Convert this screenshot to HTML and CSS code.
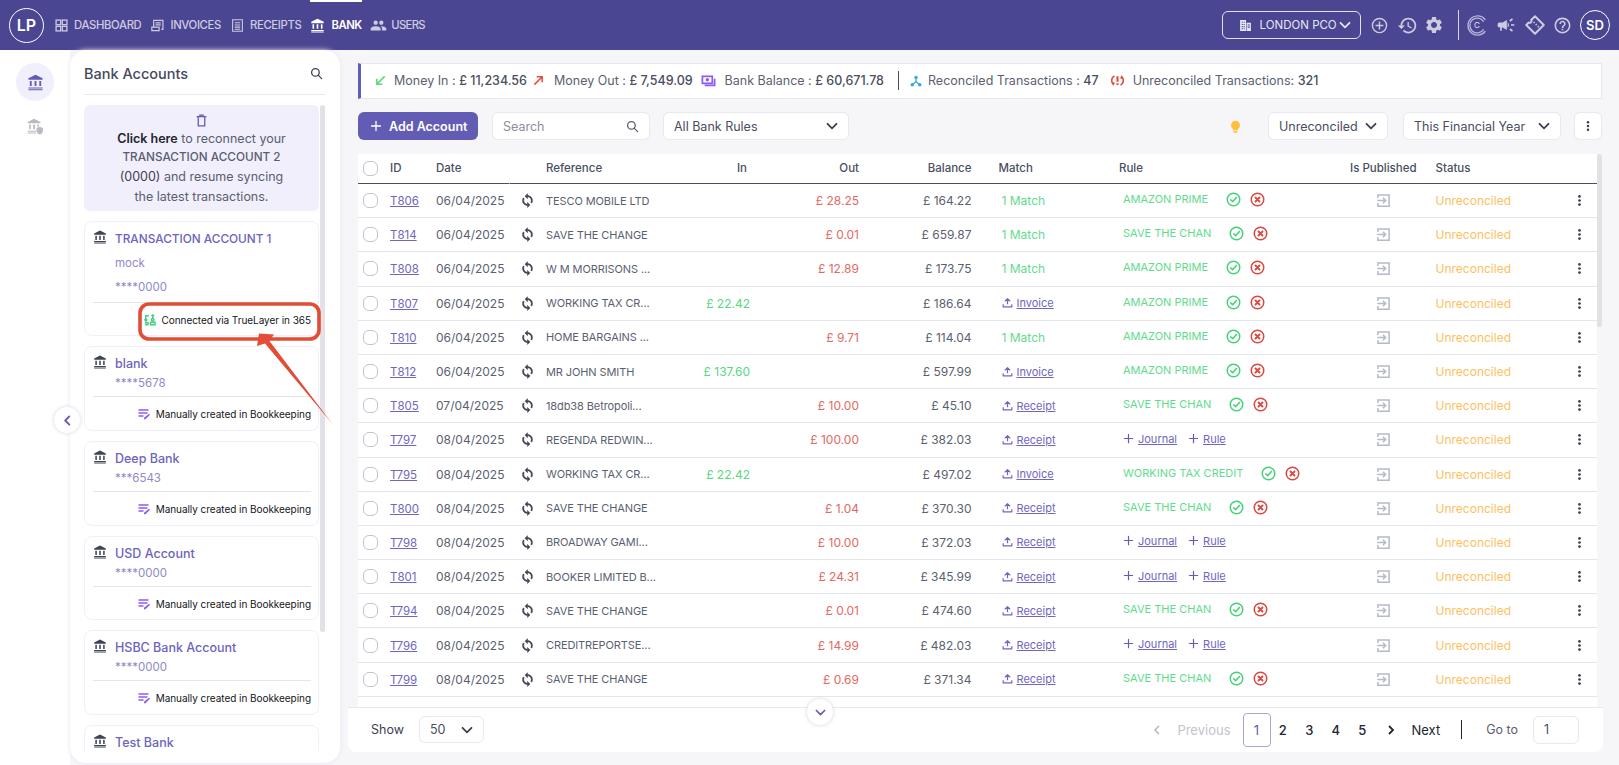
FILE: index.html
```html
<!DOCTYPE html>
<html lang="en">
<head>
<meta charset="utf-8">
<title>Bank</title>
<link rel="stylesheet" href="styles.css">
</head>
<body>
<svg class="sprite" xmlns="http://www.w3.org/2000/svg">
<symbol id="bank" viewBox="0 0 24 24"><path fill="currentColor" d="M12 1 2 6v2.2h20V6zM4 10v7h2.6v-7zm6.7 0v7h2.6v-7zm6.7 0v7H20v-7zM2 19v1.6h20V19zm0 2.4V23h20v-1.6z"/></symbol>
<symbol id="bankshield" viewBox="0 0 24 24"><path fill="currentColor" d="M10 1 1 5.5v2h18v-2zM3 9v7h2.4V9zm5.8 0v7h2.4V9zm5.8 0v3h2.4V9zM1 18v1.5h12V18zm0 2.6V22h12v-1.4z"/><path fill="currentColor" d="M18 12.5l-4.5 1.7v3.3c0 3 2 5 4.5 5.8 2.5-.8 4.5-2.8 4.5-5.8v-3.3z"/></symbol>
<symbol id="dash" viewBox="0 0 24 24"><g fill="none" stroke="currentColor" stroke-width="2.4"><rect x="2" y="2" width="8.5" height="8.5"/><rect x="13.5" y="2" width="8.5" height="8.5"/><rect x="2" y="13.5" width="8.5" height="8.5"/><rect x="13.5" y="13.5" width="8.5" height="8.5"/></g></symbol>
<symbol id="invoice" viewBox="0 0 24 24"><path fill="none" stroke="currentColor" stroke-width="2.2" d="M5 15V2.5h17V19h-3M1.500 15H15v6.500H1.500zM8.500 7H18M8.500 11H18"/></symbol>
<symbol id="receipt" viewBox="0 0 24 24"><path fill="none" stroke="currentColor" stroke-width="2" d="M3 1.500h18v21H3zM7 7h10M7 11h10M7 15h10M7 19h10"/></symbol>
<symbol id="users" viewBox="0 0 24 24"><path fill="currentColor" d="M16 11c1.660 0 2.990-1.340 2.990-3S17.660 5 16 5c-1.660 0-3 1.340-3 3s1.340 3 3 3zm-8 0c1.660 0 2.990-1.340 2.990-3S9.660 5 8 5C6.340 5 5 6.340 5 8s1.340 3 3 3zm0 2c-2.330 0-7 1.170-7 3.500V19h14v-2.500c0-2.330-4.670-3.500-7-3.500zm8 0c-.29 0-.62.02-.97.05 1.160.84 1.970 1.970 1.970 3.450V19h6v-2.500c0-2.330-4.670-3.500-7-3.500z"/></symbol>
<symbol id="building" viewBox="0 0 24 24"><path fill="currentColor" fill-rule="evenodd" d="M2 2h11v20H2zm12 5h8v15h-8zM5 5v2h2V5zm3.500 0v2h2V5zM5 9v2h2V9zm3.500 0v2h2V9zM5 13v2h2v-2zm3.500 0v2h2v-2zM5 17v2h2v-2zm3.500 0v2h2v-2zM16 10v2h4v-2zm0 4v2h4v-2z"/></symbol>
<symbol id="chev" viewBox="0 0 12 12"><path fill="none" stroke="currentColor" stroke-width="1.800" stroke-linecap="round" stroke-linejoin="round" d="M1.500 3.800 6 8.300l4.500-4.500"/></symbol>
<symbol id="plusc" viewBox="0 0 24 24"><g fill="none" stroke="currentColor" stroke-width="2"><circle cx="12" cy="12" r="10"/><path d="M12 6.500v11M6.500 12h11"/></g></symbol>
<symbol id="history" viewBox="0 0 24 24"><path fill="currentColor" d="M13 3c-4.970 0-9 4.030-9 9H1l3.890 3.890.07.14L9 12H6c0-3.870 3.130-7 7-7s7 3.130 7 7-3.130 7-7 7c-1.930 0-3.680-.79-4.940-2.060l-1.420 1.420C8.270 19.990 10.510 21 13 21c4.970 0 9-4.030 9-9s-4.030-9-9-9zm-1 5v5l4.280 2.540.72-1.210-3.500-2.080V8H12z"/></symbol>
<symbol id="gear" viewBox="0 0 24 24"><path fill="currentColor" d="M19.140 12.940c.04-.3.06-.61.06-.94 0-.32-.02-.64-.07-.94l2.030-1.580c.18-.14.23-.41.12-.61l-1.920-3.320c-.12-.22-.37-.29-.59-.22l-2.390.96c-.5-.38-1.030-.7-1.620-.94l-.36-2.540c-.04-.24-.24-.41-.48-.41h-3.840c-.24 0-.43.17-.47.41l-.36 2.540c-.59.24-1.130.57-1.620.94l-2.390-.96c-.22-.08-.47 0-.59.22L2.740 8.870c-.12.21-.08.47.12.61l2.030 1.580c-.05.3-.09.63-.09.94s.02.64.07.94l-2.030 1.580c-.18.14-.23.41-.12.61l1.920 3.320c.12.22.37.29.59.22l2.390-.96c.5.38 1.030.7 1.620.94l.36 2.540c.05.24.24.41.48.41h3.840c.24 0 .44-.17.47-.41l.36-2.540c.59-.24 1.130-.56 1.620-.94l2.390.96c.22.08.47 0 .59-.22l1.920-3.320c.12-.22.07-.47-.12-.61l-2.010-1.580zM12 15.600c-1.980 0-3.600-1.620-3.600-3.600s1.620-3.600 3.600-3.600 3.600 1.620 3.600 3.600-1.620 3.600-3.600 3.600z"/></symbol>
<symbol id="mega" viewBox="0 0 24 24"><path fill="currentColor" d="M18 11v2h4v-2h-4zm-2 6.610c.96.71 2.210 1.650 3.200 2.390.4-.53.8-1.070 1.200-1.600-.99-.74-2.240-1.680-3.200-2.400-.4.54-.8 1.080-1.200 1.610zM20.400 5.600c-.4-.53-.8-1.070-1.200-1.600-.99.74-2.240 1.680-3.200 2.400.4.53.8 1.070 1.200 1.600.96-.72 2.210-1.650 3.200-2.400zM4 9c-1.100 0-2 .9-2 2v2c0 1.100.9 2 2 2h1v4h2v-4h1l5 3V6L8 9H4zm11.500 3c0-1.330-.58-2.530-1.500-3.350v6.690c.92-.81 1.500-2.010 1.500-3.340z"/></symbol>
<symbol id="ticket" viewBox="0 0 24 24"><g fill="none" stroke="currentColor" stroke-width="2.400" stroke-linejoin="round"><path d="M12 1.500 22.500 12 12 22.500 1.500 12l3-3a2.200 2.200 0 0 0 3-3z"/><path d="M10.500 8.500l1 1M13 11l1 1M15.500 13.500l1 1"/></g></symbol>
<symbol id="help" viewBox="0 0 24 24"><path fill="currentColor" d="M11 18h2v-2h-2v2zm1-16C6.480 2 2 6.480 2 12s4.480 10 10 10 10-4.480 10-10S17.520 2 12 2zm0 18c-4.410 0-8-3.590-8-8s3.590-8 8-8 8 3.590 8 8-3.590 8-8 8zm0-14c-2.210 0-4 1.790-4 4h2c0-1.100.9-2 2-2s2 .9 2 2c0 2-3 1.750-3 5h2c0-2.250 3-2.500 3-5 0-2.210-1.790-4-4-4z"/></symbol>
<symbol id="search" viewBox="0 0 24 24"><g fill="none" stroke="currentColor" stroke-width="2.400" stroke-linecap="round"><circle cx="10" cy="10" r="7"/><path d="m15.500 15.500 6 6"/></g></symbol>
<symbol id="sync" viewBox="0 0 24 24"><path fill="currentColor" stroke="currentColor" stroke-width=".8" d="M12 4V1L8 5l4 4V6c3.310 0 6 2.690 6 6 0 1.010-.25 1.970-.7 2.800l1.460 1.460C19.540 15.030 20 13.570 20 12c0-4.420-3.580-8-8-8zm0 14c-3.310 0-6-2.690-6-6 0-1.010.25-1.970.7-2.800L5.240 7.740C4.460 8.970 4 10.430 4 12c0 4.420 3.580 8 8 8v3l4-4-4-4v3z"/></symbol>
<symbol id="pub" viewBox="0 0 24 24"><g fill="none" stroke="currentColor" stroke-width="2.400"><path d="M3 8V3h18v18H3v-5"/><path d="M2 12h13M11 7.500l4.500 4.500-4.500 4.500"/></g></symbol>
<symbol id="up" viewBox="0 0 24 24"><path fill="none" stroke="currentColor" stroke-width="2.600" stroke-linejoin="round" d="M12 16V4M6 9.500 12 3.500l6 6M2.500 16v5.500h19V16"/></symbol>
<symbol id="ok" viewBox="0 0 24 24"><g fill="none" stroke="currentColor" stroke-width="2.400" stroke-linecap="round" stroke-linejoin="round"><circle cx="12" cy="12" r="10"/><path d="m7.500 12.500 3.200 3.200 6-7"/></g></symbol>
<symbol id="no" viewBox="0 0 24 24"><g fill="none" stroke="currentColor" stroke-width="2.400" stroke-linecap="round"><circle cx="12" cy="12" r="10"/><path stroke-width="3" d="m8.800 8.800 6.400 6.400M15.200 8.800l-6.400 6.400"/></g></symbol>
<symbol id="kebab" viewBox="0 0 24 24"><g fill="currentColor"><circle cx="12" cy="4.500" r="2.500"/><circle cx="12" cy="12" r="2.500"/><circle cx="12" cy="19.500" r="2.500"/></g></symbol>
<symbol id="plus" viewBox="0 0 24 24"><path fill="none" stroke="currentColor" stroke-width="2.600" stroke-linecap="round" d="M12 3v18M3 12h18"/></symbol>
<symbol id="trash" viewBox="0 0 24 24"><path fill="none" stroke="currentColor" stroke-width="2.400" d="M3 5h18M9 5V2h6v3M6 5v17h12V5"/></symbol>
<symbol id="bulb" viewBox="0 0 24 24"><path fill="currentColor" d="M12 1.500a8.200 8.200 0 0 0-4.500 15V19h9v-2.500A8.200 8.200 0 0 0 12 1.500zM8.500 20.500h7V22a1.500 1.500 0 0 1-1.500 1.500h-4A1.500 1.500 0 0 1 8.500 22z"/></symbol>
<symbol id="arrin" viewBox="0 0 24 24"><path fill="none" stroke="currentColor" stroke-width="3.400" d="M21 3 5 19M4 8v12h12"/></symbol>
<symbol id="arrout" viewBox="0 0 24 24"><path fill="none" stroke="currentColor" stroke-width="3.400" d="M3 21 19 5M8 4h12v12"/></symbol>
<symbol id="cash" viewBox="0 0 24 24"><g fill="none" stroke="currentColor" stroke-width="3"><rect x="1.500" y="4" width="17" height="12"/><path d="M22.500 8v11.500H5.500"/></g><circle cx="10" cy="10" r="3" fill="currentColor"/></symbol>
<symbol id="nodes" viewBox="0 0 24 24"><g fill="currentColor"><circle cx="12" cy="5" r="3.500"/><circle cx="4.500" cy="19.500" r="3.500"/><circle cx="19.500" cy="19.500" r="3.500"/></g><path fill="none" stroke="currentColor" stroke-width="2.600" d="M12 5v8L4.500 19.500M12 13l7.500 6.500"/></symbol>
<symbol id="unrec" viewBox="0 0 24 24"><g fill="none" stroke="currentColor"><path stroke-width="3" d="M6.500 3.500C2.500 6 .5 9.500 1.500 14c.5 2 1.500 3.500 3 4.500"/><path stroke-width="3" d="M17.500 20.500c4-2.500 6-6 5-10.500-.5-2-1.500-3.500-3-4.500"/><path stroke-width="4" d="M12 4v10.500M12 17v3.500"/></g><path fill="currentColor" d="m1 14.500 6.500 1.500L4 22zM23 9.500 16.500 8 20 2z"/></symbol>
<symbol id="link365" viewBox="0 0 24 24"><g fill="none" stroke="currentColor" stroke-width="3"><path d="M10 3.500H3.500V14M1 10.500l2.500 4 3-4"/><circle cx="6" cy="19.500" r="2.500"/><circle cx="17.500" cy="11.500" r="2.500"/><path d="M13 21.500h9v-5h-9z"/><path d="M17.500 8V2M15 4.500l2.500-2.500 2.500 2.500"/></g></symbol>
<symbol id="manual" viewBox="0 0 24 24"><path fill="none" stroke="currentColor" stroke-width="2.600" d="M1 4h20M1 10h18M1 16h10"/><path fill="currentColor" d="M22 11.500 24 13.500 15 22.500h-3v-2.800z"/></symbol>
</svg>

<div class="app">
  <header class="topbar">
    <div class="brand">LP</div>
    <nav class="nav">
      <a class="nav-item"><svg class="nav-ic"><use href="#dash"/></svg>DASHBOARD</a>
      <a class="nav-item"><svg class="nav-ic"><use href="#invoice"/></svg>INVOICES</a>
      <a class="nav-item"><svg class="nav-ic"><use href="#receipt"/></svg>RECEIPTS</a>
      <a class="nav-item active"><svg class="nav-ic wide"><use href="#bank"/></svg>BANK</a>
      <a class="nav-item users"><svg class="nav-ic wider"><use href="#users"/></svg>USERS</a>
    </nav>
    <div class="top-right">
      <button class="company"><svg class="co-ic"><use href="#building"/></svg><span class="co-name">LONDON PCO</span><svg class="co-chev"><use href="#chev"/></svg></button>
      <svg class="tool t-plus"><use href="#plusc"/></svg>
      <svg class="tool t-hist"><use href="#history"/></svg>
      <svg class="tool t-gear"><use href="#gear"/></svg>
      <span class="top-div"></span>
      <span class="clogo"><svg viewBox="0 0 24 24"><g fill="none" stroke="currentColor"><path stroke-width="1.500" d="M21 5.500A11 11 0 1 0 21 18.500"/><path stroke-width="1.500" d="M19 7.500A8.500 8.500 0 1 0 19 16.500"/></g></svg><span class="clogo-c">C</span></span>
      <svg class="tool t-mega"><use href="#mega"/></svg>
      <svg class="tool t-tick"><use href="#ticket"/></svg>
      <svg class="tool t-help"><use href="#help"/></svg>
      <div class="avatar">SD</div>
    </div>
  </header>

  <div class="body-row">
    <aside class="rail">
      <div class="rail-on"><svg class="rail-ic"><use href="#bank"/></svg></div>
      <svg class="rail-ic2"><use href="#bankshield"/></svg>
    </aside>

    <section class="panel">
      <div class="panel-head"><h2 class="panel-title">Bank Accounts</h2><svg class="panel-search"><use href="#search"/></svg></div>
      <div class="panel-scroll">
        <div class="accounts">
          <div class="notice">
            <svg class="notice-ic"><use href="#trash"/></svg>
            <p class="nline"><b>Click here</b> to reconnect your</p>
            <p class="nline caps">TRANSACTION ACCOUNT 2</p>
            <p class="nline"><span class="dk">(0000)</span> and resume syncing</p>
            <p class="nline">the latest transactions.</p>
          </div>
          <article class="card card-first">
            <div class="card-top"><svg class="card-ic"><use href="#bank"/></svg><div class="card-info"><div class="card-name caps-name">TRANSACTION ACCOUNT 1</div><div class="card-sub">mock</div><div class="card-no">****0000</div></div></div>
            <div class="card-foot"><svg class="foot-ic green"><use href="#link365"/></svg>Connected via TrueLayer in 365</div>
          </article>
          <article class="card">
            <div class="card-top"><svg class="card-ic"><use href="#bank"/></svg><div class="card-info"><div class="card-name">blank</div><div class="card-no">****5678</div></div></div>
            <div class="card-foot"><svg class="foot-ic"><use href="#manual"/></svg>Manually created in Bookkeeping</div>
          </article>
          <article class="card">
            <div class="card-top"><svg class="card-ic"><use href="#bank"/></svg><div class="card-info"><div class="card-name">Deep Bank</div><div class="card-no">***6543</div></div></div>
            <div class="card-foot"><svg class="foot-ic"><use href="#manual"/></svg>Manually created in Bookkeeping</div>
          </article>
          <article class="card">
            <div class="card-top"><svg class="card-ic"><use href="#bank"/></svg><div class="card-info"><div class="card-name">USD Account</div><div class="card-no">****0000</div></div></div>
            <div class="card-foot"><svg class="foot-ic"><use href="#manual"/></svg>Manually created in Bookkeeping</div>
          </article>
          <article class="card">
            <div class="card-top"><svg class="card-ic"><use href="#bank"/></svg><div class="card-info"><div class="card-name">HSBC Bank Account</div><div class="card-no">****0000</div></div></div>
            <div class="card-foot"><svg class="foot-ic"><use href="#manual"/></svg>Manually created in Bookkeeping</div>
          </article>
          <article class="card">
            <div class="card-top"><svg class="card-ic"><use href="#bank"/></svg><div class="card-info"><div class="card-name">Test Bank</div></div></div>
          </article>
        </div>
        <div class="side-track"><div class="side-thumb"></div></div>
      </div>
      <button class="collapse"><svg class="collapse-ic" viewBox="0 0 12 12"><path fill="none" stroke="currentColor" stroke-width="2" stroke-linecap="round" stroke-linejoin="round" d="M8 1.500 3.500 6 8 10.500"/></svg></button>
    </section>

    <main class="main">
      <div class="summary">
        <svg class="s-ic c-in"><use href="#arrin"/></svg><span class="s-txt first">Money In : <em>£ 11,234.56</em></span>
        <svg class="s-ic c-out"><use href="#arrout"/></svg><span class="s-txt">Money Out : <em>£ 7,549.09</em></span>
        <svg class="s-ic c-cash"><use href="#cash"/></svg><span class="s-txt">Bank Balance : <em>£ 60,671.78</em></span>
        <span class="s-div"></span>
        <svg class="s-ic c-blue"><use href="#nodes"/></svg><span class="s-txt">Reconciled Transactions : <em>47</em></span>
        <svg class="s-ic c-red"><use href="#unrec"/></svg><span class="s-txt">Unreconciled Transactions: <em>321</em></span>
      </div>

      <div class="toolbar">
        <button class="btn-add"><svg class="btn-plus"><use href="#plus"/></svg>Add Account</button>
        <div class="field f-search"><span class="ph">Search</span><svg class="f-ic"><use href="#search"/></svg></div>
        <div class="field f-rules"><span>All Bank Rules</span><svg class="f-chev"><use href="#chev"/></svg></div>
        <div class="spacer"></div>
        <svg class="bulb"><use href="#bulb"/></svg>
        <div class="field f-state"><span>Unreconciled</span><svg class="f-chev"><use href="#chev"/></svg></div>
        <div class="field f-year"><span>This Financial Year</span><svg class="f-chev"><use href="#chev"/></svg></div>
        <div class="field f-more"><svg class="k-ic"><use href="#kebab"/></svg></div>
      </div>

      <div class="table-row">
        <div class="table-wrap">
          <table class="tx">
            <colgroup><col class="w1"><col class="w2"><col class="w3"><col class="w4"><col class="w5"><col class="w6"><col class="w7"><col class="w8"><col class="w9"><col class="w10"><col class="w11"><col class="w12"><col class="w13"></colgroup>
            <thead><tr><th><span class="cb"></span></th><th>ID</th><th class="th-date">Date</th><th></th><th>Reference</th><th class="r th-in">In</th><th class="r">Out</th><th class="r">Balance</th><th class="th-match">Match</th><th>Rule</th><th>Is Published</th><th>Status</th><th></th></tr></thead>
            <tbody>
<tr><td><span class="cb"></span></td><td><a class="tid">T806</a></td><td>06/04/2025</td><td class="sy"><svg><use href="#sync"/></svg></td><td class="ref">TESCO MOBILE LTD</td><td></td><td class="out">£ 28.25</td><td class="bal">£ 164.22</td><td class="match">1 Match</td><td class="rule"><span class="rule-n">AMAZON PRIME</span><svg class="yes"><use href="#ok"/></svg><svg class="nope"><use href="#no"/></svg></td><td class="pb"><svg><use href="#pub"/></svg></td><td class="st">Unreconciled</td><td class="ke"><svg><use href="#kebab"/></svg></td></tr>
<tr><td><span class="cb"></span></td><td><a class="tid">T814</a></td><td>06/04/2025</td><td class="sy"><svg><use href="#sync"/></svg></td><td class="ref">SAVE THE CHANGE</td><td></td><td class="out">£ 0.01</td><td class="bal">£ 659.87</td><td class="match">1 Match</td><td class="rule"><span class="rule-n">SAVE THE CHAN</span><svg class="yes"><use href="#ok"/></svg><svg class="nope"><use href="#no"/></svg></td><td class="pb"><svg><use href="#pub"/></svg></td><td class="st">Unreconciled</td><td class="ke"><svg><use href="#kebab"/></svg></td></tr>
<tr><td><span class="cb"></span></td><td><a class="tid">T808</a></td><td>06/04/2025</td><td class="sy"><svg><use href="#sync"/></svg></td><td class="ref">W M MORRISONS ...</td><td></td><td class="out">£ 12.89</td><td class="bal">£ 173.75</td><td class="match">1 Match</td><td class="rule"><span class="rule-n">AMAZON PRIME</span><svg class="yes"><use href="#ok"/></svg><svg class="nope"><use href="#no"/></svg></td><td class="pb"><svg><use href="#pub"/></svg></td><td class="st">Unreconciled</td><td class="ke"><svg><use href="#kebab"/></svg></td></tr>
<tr><td><span class="cb"></span></td><td><a class="tid">T807</a></td><td>06/04/2025</td><td class="sy"><svg><use href="#sync"/></svg></td><td class="ref">WORKING TAX CR...</td><td class="in">£ 22.42</td><td></td><td class="bal">£ 186.64</td><td class="match-l"><svg><use href="#up"/></svg><a>Invoice</a></td><td class="rule"><span class="rule-n">AMAZON PRIME</span><svg class="yes"><use href="#ok"/></svg><svg class="nope"><use href="#no"/></svg></td><td class="pb"><svg><use href="#pub"/></svg></td><td class="st">Unreconciled</td><td class="ke"><svg><use href="#kebab"/></svg></td></tr>
<tr><td><span class="cb"></span></td><td><a class="tid">T810</a></td><td>06/04/2025</td><td class="sy"><svg><use href="#sync"/></svg></td><td class="ref">HOME BARGAINS ...</td><td></td><td class="out">£ 9.71</td><td class="bal">£ 114.04</td><td class="match">1 Match</td><td class="rule"><span class="rule-n">AMAZON PRIME</span><svg class="yes"><use href="#ok"/></svg><svg class="nope"><use href="#no"/></svg></td><td class="pb"><svg><use href="#pub"/></svg></td><td class="st">Unreconciled</td><td class="ke"><svg><use href="#kebab"/></svg></td></tr>
<tr><td><span class="cb"></span></td><td><a class="tid">T812</a></td><td>06/04/2025</td><td class="sy"><svg><use href="#sync"/></svg></td><td class="ref">MR JOHN SMITH</td><td class="in">£ 137.60</td><td></td><td class="bal">£ 597.99</td><td class="match-l"><svg><use href="#up"/></svg><a>Invoice</a></td><td class="rule"><span class="rule-n">AMAZON PRIME</span><svg class="yes"><use href="#ok"/></svg><svg class="nope"><use href="#no"/></svg></td><td class="pb"><svg><use href="#pub"/></svg></td><td class="st">Unreconciled</td><td class="ke"><svg><use href="#kebab"/></svg></td></tr>
<tr><td><span class="cb"></span></td><td><a class="tid">T805</a></td><td>07/04/2025</td><td class="sy"><svg><use href="#sync"/></svg></td><td class="ref">18db38 Betropoli...</td><td></td><td class="out">£ 10.00</td><td class="bal">£ 45.10</td><td class="match-l"><svg><use href="#up"/></svg><a>Receipt</a></td><td class="rule"><span class="rule-n">SAVE THE CHAN</span><svg class="yes"><use href="#ok"/></svg><svg class="nope"><use href="#no"/></svg></td><td class="pb"><svg><use href="#pub"/></svg></td><td class="st">Unreconciled</td><td class="ke"><svg><use href="#kebab"/></svg></td></tr>
<tr><td><span class="cb"></span></td><td><a class="tid">T797</a></td><td>08/04/2025</td><td class="sy"><svg><use href="#sync"/></svg></td><td class="ref">REGENDA REDWIN...</td><td></td><td class="out">£ 100.00</td><td class="bal">£ 382.03</td><td class="match-l"><svg><use href="#up"/></svg><a>Receipt</a></td><td class="rule"><svg class="add"><use href="#plus"/></svg><a class="add-l">Journal</a><svg class="add a2"><use href="#plus"/></svg><a class="add-l">Rule</a></td><td class="pb"><svg><use href="#pub"/></svg></td><td class="st">Unreconciled</td><td class="ke"><svg><use href="#kebab"/></svg></td></tr>
<tr><td><span class="cb"></span></td><td><a class="tid">T795</a></td><td>08/04/2025</td><td class="sy"><svg><use href="#sync"/></svg></td><td class="ref">WORKING TAX CR...</td><td class="in">£ 22.42</td><td></td><td class="bal">£ 497.02</td><td class="match-l"><svg><use href="#up"/></svg><a>Invoice</a></td><td class="rule"><span class="rule-n">WORKING TAX CREDIT</span><svg class="yes"><use href="#ok"/></svg><svg class="nope"><use href="#no"/></svg></td><td class="pb"><svg><use href="#pub"/></svg></td><td class="st">Unreconciled</td><td class="ke"><svg><use href="#kebab"/></svg></td></tr>
<tr><td><span class="cb"></span></td><td><a class="tid">T800</a></td><td>08/04/2025</td><td class="sy"><svg><use href="#sync"/></svg></td><td class="ref">SAVE THE CHANGE</td><td></td><td class="out">£ 1.04</td><td class="bal">£ 370.30</td><td class="match-l"><svg><use href="#up"/></svg><a>Receipt</a></td><td class="rule"><span class="rule-n">SAVE THE CHAN</span><svg class="yes"><use href="#ok"/></svg><svg class="nope"><use href="#no"/></svg></td><td class="pb"><svg><use href="#pub"/></svg></td><td class="st">Unreconciled</td><td class="ke"><svg><use href="#kebab"/></svg></td></tr>
<tr><td><span class="cb"></span></td><td><a class="tid">T798</a></td><td>08/04/2025</td><td class="sy"><svg><use href="#sync"/></svg></td><td class="ref">BROADWAY GAMI...</td><td></td><td class="out">£ 10.00</td><td class="bal">£ 372.03</td><td class="match-l"><svg><use href="#up"/></svg><a>Receipt</a></td><td class="rule"><svg class="add"><use href="#plus"/></svg><a class="add-l">Journal</a><svg class="add a2"><use href="#plus"/></svg><a class="add-l">Rule</a></td><td class="pb"><svg><use href="#pub"/></svg></td><td class="st">Unreconciled</td><td class="ke"><svg><use href="#kebab"/></svg></td></tr>
<tr><td><span class="cb"></span></td><td><a class="tid">T801</a></td><td>08/04/2025</td><td class="sy"><svg><use href="#sync"/></svg></td><td class="ref">BOOKER LIMITED B...</td><td></td><td class="out">£ 24.31</td><td class="bal">£ 345.99</td><td class="match-l"><svg><use href="#up"/></svg><a>Receipt</a></td><td class="rule"><svg class="add"><use href="#plus"/></svg><a class="add-l">Journal</a><svg class="add a2"><use href="#plus"/></svg><a class="add-l">Rule</a></td><td class="pb"><svg><use href="#pub"/></svg></td><td class="st">Unreconciled</td><td class="ke"><svg><use href="#kebab"/></svg></td></tr>
<tr><td><span class="cb"></span></td><td><a class="tid">T794</a></td><td>08/04/2025</td><td class="sy"><svg><use href="#sync"/></svg></td><td class="ref">SAVE THE CHANGE</td><td></td><td class="out">£ 0.01</td><td class="bal">£ 474.60</td><td class="match-l"><svg><use href="#up"/></svg><a>Receipt</a></td><td class="rule"><span class="rule-n">SAVE THE CHAN</span><svg class="yes"><use href="#ok"/></svg><svg class="nope"><use href="#no"/></svg></td><td class="pb"><svg><use href="#pub"/></svg></td><td class="st">Unreconciled</td><td class="ke"><svg><use href="#kebab"/></svg></td></tr>
<tr><td><span class="cb"></span></td><td><a class="tid">T796</a></td><td>08/04/2025</td><td class="sy"><svg><use href="#sync"/></svg></td><td class="ref">CREDITREPORTSE...</td><td></td><td class="out">£ 14.99</td><td class="bal">£ 482.03</td><td class="match-l"><svg><use href="#up"/></svg><a>Receipt</a></td><td class="rule"><svg class="add"><use href="#plus"/></svg><a class="add-l">Journal</a><svg class="add a2"><use href="#plus"/></svg><a class="add-l">Rule</a></td><td class="pb"><svg><use href="#pub"/></svg></td><td class="st">Unreconciled</td><td class="ke"><svg><use href="#kebab"/></svg></td></tr>
<tr><td><span class="cb"></span></td><td><a class="tid">T799</a></td><td>08/04/2025</td><td class="sy"><svg><use href="#sync"/></svg></td><td class="ref">SAVE THE CHANGE</td><td></td><td class="out">£ 0.69</td><td class="bal">£ 371.34</td><td class="match-l"><svg><use href="#up"/></svg><a>Receipt</a></td><td class="rule"><span class="rule-n">SAVE THE CHAN</span><svg class="yes"><use href="#ok"/></svg><svg class="nope"><use href="#no"/></svg></td><td class="pb"><svg><use href="#pub"/></svg></td><td class="st">Unreconciled</td><td class="ke"><svg><use href="#kebab"/></svg></td></tr>
            </tbody>
          </table>
        </div>
        <div class="tbl-track"><div class="tbl-thumb"></div></div>
      </div>

      <footer class="pager">
        <span class="show">Show</span>
        <div class="field f-show"><span>50</span><svg class="f-chev"><use href="#chev"/></svg></div>
        <button class="more"><svg class="more-ic"><use href="#chev"/></svg></button>
        <div class="spacer"></div>
        <svg class="pg-arrow dim" viewBox="0 0 12 12"><path fill="none" stroke="currentColor" stroke-width="1.600" d="M8 2 4 6l4 4"/></svg>
        <span class="pg-prev">Previous</span>
        <span class="pg-cur">1</span>
        <span class="pg-n">2</span><span class="pg-n">3</span><span class="pg-n">4</span><span class="pg-n">5</span>
        <svg class="pg-arrow next" viewBox="0 0 12 12"><path fill="none" stroke="currentColor" stroke-width="1.800" d="m4 2 4 4-4 4"/></svg>
        <span class="pg-next">Next</span>
        <span class="pg-div"></span>
        <span class="goto">Go to</span>
        <div class="field f-goto"><span>1</span></div>
      </footer>
    </main>
  </div>

  <svg class="annot" viewBox="0 0 1619 765">
    <rect x="140" y="304" width="179" height="35" rx="9" fill="none" stroke="#e24d38" stroke-width="3.600"/>
    <path fill="#e24d38" d="M259 333.500 274 334.500 269.500 341 332.500 424 265 343.500 257 346z"/>
  </svg>
</div>
</body>
</html>
```

FILE: styles.css
```css
* { box-sizing: border-box; }
html, body { margin: 0; height: 100%; }
body { font-family: Inter, "Open Sans", sans-serif; color: #4a4e60; background: #f6f6f8; overflow: hidden; }
button { font-family: inherit; padding: 0; border: 0; background: none; }
h2, p { margin: 0; }
.sprite { display: none; }

.app { width: 1619px; height: 765px; display: flex; flex-direction: column; position: relative; overflow: hidden; }

/* top bar */
.topbar { height: 50px; flex: none; background: #4b4691; display: flex; align-items: center; padding-left: 9px; color: #cdcbe2; }
.brand { width: 35px; height: 35px; border: 1px solid #fff; border-radius: 50%; display: flex; align-items: center; justify-content: center; color: #fff; font-size: 16px; font-weight: 600; flex: none; }
.nav { display: flex; margin-left: 11px; height: 50px; gap: 10px; }
.nav-item { position: relative; display: flex; align-items: center; gap: 6px; font-size: 11.3px; font-weight: 500; letter-spacing: -.35px; color: #cdcbe2; white-space: nowrap; }
.nav-ic { width: 13px; height: 13px; flex: none; }
.nav-ic.wide { width: 15px; height: 15px; }
.nav-ic.wider { width: 17px; height: 17px; }
.nav-item.active { color: #fff; font-weight: 600; letter-spacing: -.45px; margin-left: -1px; margin-right: -1.5px; }
.nav-item.active::before { content: ""; position: absolute; left: 0; right: 0; top: 0; height: 2px; background: #fff; }
.nav-item.users { letter-spacing: -.7px; gap: 4px; }
.top-right { margin-left: auto; display: flex; align-items: center; padding-right: 9px; }
.company { width: 139px; height: 28px; border: 1px solid #e3e2f0; border-radius: 6px; color: #e6e5f2; display: flex; align-items: center; padding-left: 16px; }
.co-ic { width: 13px; height: 13px; flex: none; }
.co-name { font-size: 11.5px; margin-left: 8px; white-space: nowrap; }
.co-chev { width: 12px; height: 12px; margin-left: 2px; flex: none; }
.tool { flex: none; color: #cdcbe2; }
.t-plus { width: 17px; height: 17px; margin-left: 10px; }
.t-hist { width: 21px; height: 21px; margin-left: 9px; }
.t-gear { width: 20px; height: 20px; margin-left: 6.5px; }
.top-div { width: 1px; height: 30px; background: #d9d8ea; margin: 0 7.5px 0 14px; flex: none; }
.clogo { position: relative; width: 21px; height: 21px; color: #b9b6d8; flex: none; display: block; }
.clogo svg { width: 21px; height: 21px; display: block; }
.clogo-c { position: absolute; inset: 0; display: flex; align-items: center; justify-content: center; font-size: 8px; color: #e6e5f2; }
.t-mega { width: 20px; height: 20px; margin-left: 8.5px; }
.t-tick { width: 20px; height: 20px; margin-left: 8.5px; }
.t-help { width: 19px; height: 19px; margin-left: 8px; }
.avatar { width: 30px; height: 30px; border: 1px solid #fff; border-radius: 50%; color: #fff; display: flex; align-items: center; justify-content: center; font-size: 13px; font-weight: 600; margin-left: 8.5px; flex: none; }

.body-row { flex: 1; min-height: 0; display: flex; }

/* rail */
.rail { width: 70px; flex: none; background: #fff; display: flex; flex-direction: column; align-items: center; padding: 13px 0 0; }
.rail-on { width: 38px; height: 38px; border-radius: 50%; background: #f0effb; display: flex; align-items: center; justify-content: center; color: #625cb5; }
.rail-ic { width: 17px; height: 17px; }
.rail-ic2 { width: 17px; height: 17px; margin-top: 17px; color: #b9bbc2; }

/* account panel */
.panel { width: 270px; flex: none; height: 713px; background: #fff; border-radius: 16px; box-shadow: 0 0 5px #e6e6f6; padding: 0 15px 12px 14px; display: flex; flex-direction: column; position: relative; }
.panel-head { height: 45px; flex: none; border-bottom: 1px solid #e9e9f1; display: flex; align-items: center; justify-content: space-between; padding: 2px 2px 0 0; }
.panel-title { font-size: 14.5px; font-weight: 500; color: #454a5d; }
.panel-search { width: 13px; height: 13px; color: #3c4050; }
.panel-scroll { flex: 1; min-height: 0; display: flex; margin-top: 10px; overflow: hidden; }
.accounts { width: 235px; flex: none; display: flex; flex-direction: column; gap: 10px; overflow: hidden; }
.side-track { width: 5px; margin-left: 1px; flex: none; }
.side-thumb { height: 527px; background: #e1e1e6; border-radius: 3px; }
.notice { flex: none; height: 106px; background: #f0effb; border-radius: 6px; padding: 8px 10px 0; text-align: center; font-size: 12.5px; color: #5a5e70; }
.nline { line-height: 19.2px; white-space: nowrap; }
.nline.caps { font-size: 11.75px; font-weight: 500; }
.dk { color: #3c4050; }
.notice-ic { width: 13px; height: 15px; display: block; margin: 0 auto 1px; color: #625cb5; }
.notice b { color: #22252f; font-weight: 600; }
.card { flex: none; height: 84.8px; border: 1px solid #f1f0fa; border-radius: 8px; padding: 8px 7px 0 8px; }
.card-first { height: 115px; }
.card-top { display: flex; height: 42px; border-bottom: 1px solid #e4e4e9; }
.card-first .card-top { height: 73px; }
.card-ic { width: 14px; height: 14px; color: #3f4356; flex: none; }
.card-info { margin-left: 8px; }
.card-name { font-size: 12.5px; font-weight: 500; color: #6c64bd; line-height: 18px; white-space: nowrap; }
.card-name.caps-name { font-size: 11.8px; }
.card-no { font-size: 11.5px; color: #8f8ac9; line-height: 18px; margin-top: 1px; }
.card-sub { font-size: 11.5px; color: #8f8ac9; line-height: 18px; margin-top: 6px; }
.card-first .card-no { margin-top: 6px; }
.card-foot { display: flex; align-items: center; justify-content: flex-end; height: 31px; padding-top: 3px; font-size: 10px; color: #14151a; white-space: nowrap; letter-spacing: -.05px; }
.foot-ic { width: 12px; height: 12px; margin-right: 6px; color: #8b5cf6; flex: none; }
.foot-ic.green { color: #44cf80; margin-right: 5px; }
.collapse { position: absolute; left: -16px; top: 357px; width: 26px; height: 26px; border-radius: 50%; background: #fff; box-shadow: 0 0 4px #d5d5e0; display: flex; align-items: center; justify-content: center; color: #625cb5; }
.collapse-ic { width: 11px; height: 11px; }

/* main */
.main { flex: 1; min-width: 0; padding: 13px 17px 0 18px; display: flex; flex-direction: column; }
.summary { height: 36px; flex: none; background: #fff; border: 1px solid #e7e7ee; border-left: 3px solid #625cb5; display: flex; align-items: center; padding: 0 0 1px 14px; font-size: 12.5px; color: #5b5f70; white-space: nowrap; }
.s-txt em { font-style: normal; font-weight: 500; color: #4a4e60; }
.s-ic { width: 11px; height: 11px; flex: none; margin-right: 8px; }
.s-txt { margin-right: 8px; }
.s-txt.first { margin-right: 6px; }
.c-in { color: #58d87f; }
.c-out { color: #e0503c; margin-right: 10px; }
.c-cash { color: #8b5cf6; width: 15px; height: 14px; margin-right: 9px; }
.c-blue { color: #36a9e1; width: 12px; height: 12px; margin-right: 6px; }
.c-red { color: #e0503c; width: 13px; height: 13px; margin: 0 9px 0 4px; }
.s-div { width: 1px; height: 19px; background: #4a4e60; margin: 0 11px 0 6px; flex: none; }

.toolbar { height: 28px; flex: none; margin-top: 13px; display: flex; align-items: center; }
.btn-add { width: 120px; height: 28px; background: #625cb5; border-radius: 6px; color: #fff; font-size: 12.5px; font-weight: 600; display: flex; align-items: center; padding-left: 12px; white-space: nowrap; flex: none; }
.btn-plus { width: 12px; height: 12px; margin-right: 7px; }
.field { height: 28px; background: #fff; border: 1px solid #e8e8ef; border-radius: 6px; display: flex; align-items: center; font-size: 12.5px; color: #4a4e60; flex: none; white-space: nowrap; justify-content: space-between; padding: 0 10px; }
.f-search { width: 158px; margin-left: 14px; }
.ph { color: #8b8e99; }
.f-ic { width: 13px; height: 13px; color: #5b5f70; }
.f-rules { width: 186px; margin-left: 13px; }
.f-chev { width: 12px; height: 12px; color: #3c4050; flex: none; }
.spacer { flex: 1; }
.bulb { width: 13px; height: 15px; color: #fdbf3d; margin-right: 26px; flex: none; }
.f-state { width: 120px; }
.f-year { width: 158px; margin-left: 15px; }
.f-more { width: 28px; margin-left: 13px; justify-content: center; padding: 0; }
.k-ic { width: 12px; height: 12px; color: #3c4050; }

.table-row { flex: none; display: flex; margin-top: 14px; }
.table-wrap { width: 1239px; height: 553px; background: #fff; overflow: hidden; flex: none; }
.tbl-track { width: 5px; flex: none; }
.tbl-thumb { height: 173px; background: #e1e1e6; border-radius: 3px; }
.tx { table-layout: fixed; width: 1239px; border-collapse: separate; border-spacing: 0; font-size: 12px; }
.w1 { width: 32px; } .w2 { width: 46px; } .w3 { width: 74px; } .w4 { width: 36px; } .w5 { width: 124px; } .w6 { width: 80px; } .w7 { width: 109px; } .w8 { width: 112.5px; } .w9 { width: 147.5px; } .w10 { width: 231px; } .w11 { width: 85.5px; } .w12 { width: 124.5px; } .w13 { width: 37px; }
.tx th { height: 30px; padding: 0 0 1px; text-align: left; font-size: 11.5px; font-weight: 500; color: #4a4e60; border-bottom: 1px solid #4a4e60; white-space: nowrap; }
.tx th.r { text-align: right; }
.tx th.th-in { padding-right: 3px; }
.tx th.th-date { border-right: 1px solid #fff; }
.tx th.th-match { padding-left: 27px; }
.tx td { height: 34.2px; padding: 0; border-bottom: 1px solid #e5e5ec; white-space: nowrap; color: #5b5f70; vertical-align: middle; }
.cb { display: block; width: 15px; height: 15px; margin-left: 5px; border: 1.5px solid #c3c4cb; border-radius: 6px; background: #fff; }
.tid { color: #6e66c0; text-decoration: underline; font-size: 11.5px; }
.sy svg { width: 15px; height: 15px; display: block; margin-left: 10px; color: #3c4050; }
.ref { font-size: 11px; letter-spacing: -.1px; }
.tx td.in { text-align: right; color: #58d87f; }
.tx td.out { text-align: right; color: #e26a62; }
.tx td.bal { text-align: right; }
.tx td.match { padding-left: 30px; color: #5fdc8c; }
.tx td.match-l { padding-left: 30px; font-size: 11px; }
.match-l svg { width: 11px; height: 11px; color: #6e66c0; margin-right: 4px; vertical-align: -1px; }
.match-l a { color: #6e66c0; text-decoration: underline; }
.tx td.rule { padding: 0 0 2px 4px; font-size: 11px; }
.rule-n { color: #5fdc8c; }
.yes, .nope { width: 15px; height: 15px; vertical-align: -4px; }
.yes { margin-left: 17.5px; color: #45d277; }
.nope { margin-left: 9.5px; color: #d9493f; }
.add { width: 11px; height: 11px; color: #625cb5; margin-right: 4px; vertical-align: -1px; }
.add.a2 { margin-left: 11px; }
.add-l { color: #6e66c0; text-decoration: underline; }
.pb svg { width: 15px; height: 15px; display: block; margin-left: 26px; color: #b5bac6; }
.tx td.st { color: #fdc05e; }
.ke svg { width: 13px; height: 13px; display: block; margin-left: 13px; color: #3c4050; }

/* pager */
.pager { height: 45px; flex: none; margin: 0 -1px 0 -10px; background: #fff; border-top: 1px solid #e7e7ee; border-radius: 0 0 8px 8px; display: flex; align-items: center; padding: 0 24px 1px 23px; position: relative; font-size: 12.5px; }
.show { color: #3c4050; }
.f-show { width: 65px; height: 27px; margin-left: 15px; }
.more { position: absolute; left: 459px; top: -9px; width: 26px; height: 26px; border-radius: 50%; background: #fff; box-shadow: 0 0 4px #d5d5e0; display: flex; align-items: center; justify-content: center; color: #625cb5; }
.more-ic { width: 11px; height: 11px; }
.pg-arrow { width: 12px; height: 12px; flex: none; }
.pg-arrow.dim { color: #b6b8c0; }
.pg-arrow.next { color: #22252f; margin-left: 9px; }
.pg-prev { color: #c3c4cb; margin-left: 14px; font-size: 13px; }
.pg-cur { width: 28px; height: 34px; border: 1px solid #a9a5d9; border-radius: 4px; color: #625cb5; display: flex; align-items: center; justify-content: center; margin-left: 12px; margin-right: -1px; font-size: 13px; }
.pg-n { width: 26.5px; text-align: center; color: #22252f; font-size: 13px; font-weight: 500; }
.pg-next { color: #22252f; font-size: 13px; margin-left: 15px; }
.pg-div { width: 1px; height: 19px; background: #22252f; margin: 0 24px 0 21px; flex: none; }
.goto { color: #5b5f70; }
.f-goto { width: 46px; margin-left: 15px; }

.annot { position: absolute; left: 0; top: 0; width: 1619px; height: 765px; pointer-events: none; }
```
